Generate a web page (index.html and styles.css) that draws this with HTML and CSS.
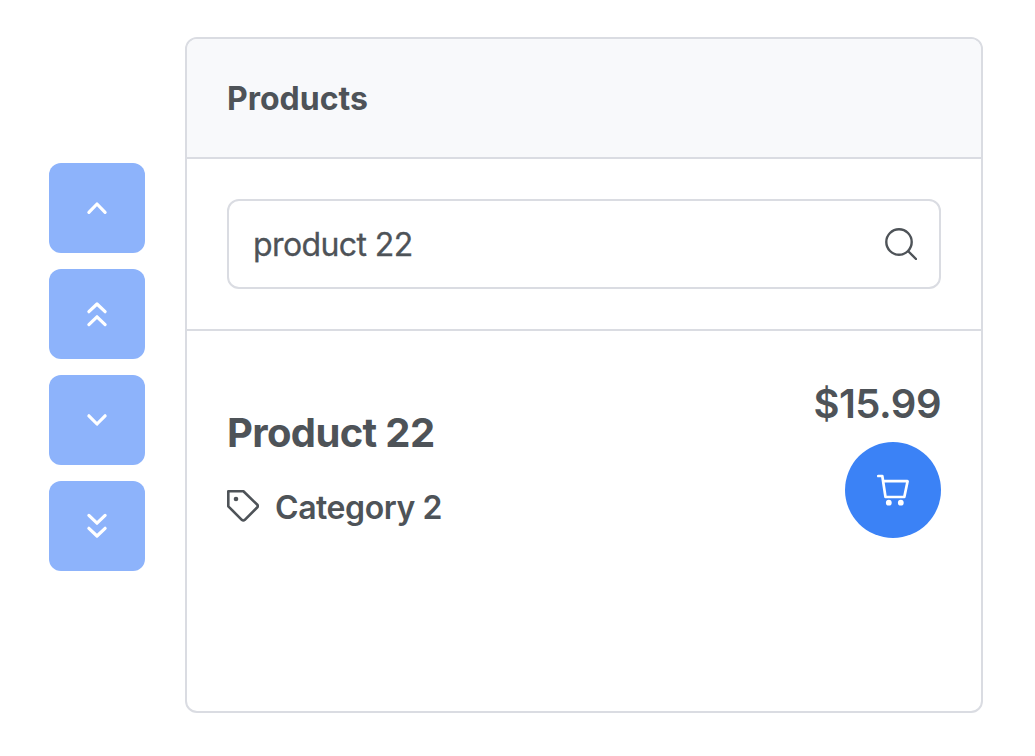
FILE: index.html
```html
<!DOCTYPE html>
<html lang="en">
<head>
<meta charset="utf-8">
<title>Products</title>
<link rel="stylesheet" href="styles.css">
</head>
<body>
<main class="orderlist">
  <div class="controls">
    <button class="control" aria-label="Move up"><svg viewBox="0 0 32 32"><path d="M24.1 20.3 16 12 7.9 20.3"/></svg></button>
    <button class="control" aria-label="Move to top"><svg viewBox="0 0 32 32"><path d="M24.1 13.7 16 6 7.9 13.7M24.1 26.6 16 18.8 7.9 26.6"/></svg></button>
    <button class="control" aria-label="Move down"><svg viewBox="0 0 32 32"><path d="M7.9 11.8 16 20 24.1 11.8"/></svg></button>
    <button class="control" aria-label="Move to bottom"><svg viewBox="0 0 32 32"><path d="M7.9 5.4 16 13.2 24.1 5.4M7.9 18.3 16 26 24.1 18.3"/></svg></button>
  </div>
  <section class="panel">
    <header class="panel-header">Products</header>
    <div class="filter">
      <label class="search">
        <input class="search-input" type="text" value="product 22" aria-label="Filter products">
        <svg class="search-icon" viewBox="0 0 32 32"><circle cx="14" cy="14" r="12.7"/><path d="M23.5 23.5 31 31"/></svg>
      </label>
    </div>
    <article class="item">
      <div class="details">
        <h2 class="name">Product 22</h2>
        <div class="category">
          <svg class="tag" viewBox="0 0 32 32"><path d="M1.3 1.3H16.4L30.1 14.5Q31.5 16 30.1 17.5L17.8 29.8Q16.3 31.2 14.8 29.8L1.3 16.3Z"/><circle cx="9" cy="9" r="2.3"/></svg>
          <span class="category-name">Category 2</span>
        </div>
      </div>
      <div class="purchase">
        <span class="price">$15.99</span>
        <button class="cart" aria-label="Add to cart"><svg viewBox="0 0 32 32"><path d="M1.3 2H5.3L8.5 23H27.3L30.6 7.2H6.1"/><circle cx="11.8" cy="28.7" r="2.9"/><circle cx="23.8" cy="28.7" r="2.9"/></svg></button>
      </div>
    </article>
  </section>
</main>
</body>
</html>
```
FILE: styles.css
```css
* { box-sizing: border-box; }
body {
  margin: 0;
  background: #fff;
  color: #4e5358;
  font-family: Inter, "Liberation Sans", sans-serif;
  font-size: 32px;
}
button { padding: 0; border: 0; }
svg { display: block; fill: none; stroke: currentColor; stroke-linejoin: round; stroke-linecap: round; }
.orderlist { display: flex; gap: 40px; padding: 37px 52px 43px 49px; height: 756px; }
.controls { display: flex; flex-direction: column; gap: 16px; padding-top: 126px; }
.control {
  display: grid;
  place-items: center;
  width: 96px;
  height: 90px;
  border-radius: 12px;
  background: #8db3fb;
  color: #fff;
}
.control svg { width: 32px; height: 32px; stroke-width: 3.2; }
.panel { flex: 1; border: 2px solid #dadce2; border-radius: 12px; overflow: hidden; }
.panel-header {
  display: flex;
  align-items: center;
  height: 120px;
  padding: 0 40px;
  border-bottom: 2px solid #dadce2;
  background: #f8f9fb;
  font-weight: 700;
}
.filter { height: 172px; padding: 40px; border-bottom: 2px solid #dadce2; }
.search {
  display: flex;
  align-items: center;
  height: 90px;
  padding: 0 22px 0 24px;
  border: 2px solid #dadce2;
  border-radius: 12px;
}
.search-input {
  flex: 1;
  min-width: 0;
  padding: 0;
  border: 0;
  outline: 0;
  background: transparent;
  color: inherit;
  font: inherit;
  letter-spacing: -0.6px;
  -webkit-text-stroke: 0.3px currentColor;
}
.search-icon { width: 32px; height: 32px; stroke-width: 2.4; }
.item { display: flex; justify-content: space-between; padding: 49px 40px; }
.details { padding-top: 29px; }
.name { margin: 0; font-size: 40px; line-height: 48px; font-weight: 700; letter-spacing: -0.65px; }
.category { display: flex; align-items: center; gap: 16px; margin-top: 29px; font-weight: 600; line-height: 40px; letter-spacing: -0.45px; }
.category-name { padding-top: 2px; margin-bottom: -2px; }
.tag { width: 32px; height: 32px; stroke-width: 2.6; }
.tag circle, .cart circle { fill: currentColor; stroke: none; }
.purchase { display: flex; flex-direction: column; align-items: flex-end; gap: 14px; }
.price { font-size: 40px; line-height: 48px; font-weight: 600; letter-spacing: -0.5px; }
.cart {
  display: grid;
  place-items: center;
  width: 96px;
  height: 96px;
  border-radius: 50%;
  background: #3b82f6;
  color: #fff;
}
.cart svg { width: 32px; height: 32px; stroke-width: 2.7; }
```
